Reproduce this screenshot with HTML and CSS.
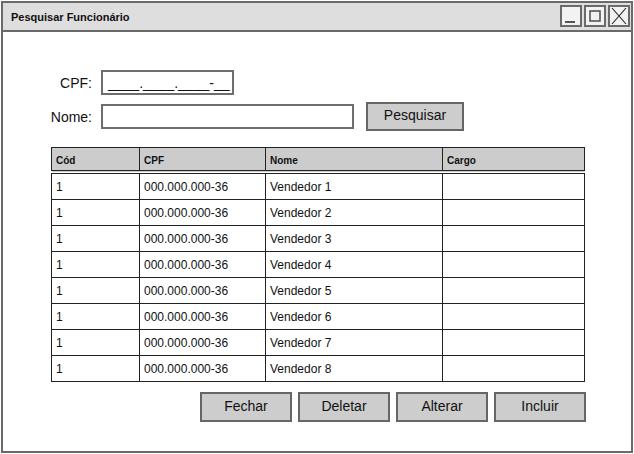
FILE: index.html
```html
<!DOCTYPE html>
<html lang="pt">
<head>
<meta charset="utf-8">
<title>Pesquisar Funcionário</title>
<link rel="stylesheet" href="styles.css">
</head>
<body>
<div class="window">
  <div class="titlebar">
    <span class="title">Pesquisar Funcionário</span>
    <div class="controls">
      <span class="ctl"><svg width="18" height="18" viewBox="0 0 18 18"><line x1="3" y1="15" x2="13" y2="15" stroke="#555" stroke-width="2"/></svg></span>
      <span class="ctl"><svg width="18" height="18" viewBox="0 0 18 18"><rect x="4" y="4" width="10" height="10" fill="none" stroke="#555" stroke-width="1.6"/></svg></span>
      <span class="ctl"><svg width="18" height="18" viewBox="0 0 18 18"><path d="M2 1 L16 17 M16 1 L2 17" stroke="#222" stroke-width="1.1" fill="none"/></svg></span>
    </div>
  </div>
  <div class="content">
    <div class="form">
      <div class="row">
        <label class="lbl">CPF:</label>
        <div class="input cpf">____.____.____-__</div>
      </div>
      <div class="row">
        <label class="lbl">Nome:</label>
        <div class="input nome"></div>
        <div class="btn search">Pesquisar</div>
      </div>
    </div>
    <table class="grid">
      <colgroup>
        <col class="c1"><col class="c2"><col class="c3"><col class="c4">
      </colgroup>
      <thead>
        <tr><th>Cód</th><th>CPF</th><th>Nome</th><th>Cargo</th></tr>
      </thead>
      <tbody>
        <tr><td>1</td><td>000.000.000-36</td><td>Vendedor 1</td><td></td></tr>
        <tr><td>1</td><td>000.000.000-36</td><td>Vendedor 2</td><td></td></tr>
        <tr><td>1</td><td>000.000.000-36</td><td>Vendedor 3</td><td></td></tr>
        <tr><td>1</td><td>000.000.000-36</td><td>Vendedor 4</td><td></td></tr>
        <tr><td>1</td><td>000.000.000-36</td><td>Vendedor 5</td><td></td></tr>
        <tr><td>1</td><td>000.000.000-36</td><td>Vendedor 6</td><td></td></tr>
        <tr><td>1</td><td>000.000.000-36</td><td>Vendedor 7</td><td></td></tr>
        <tr><td>1</td><td>000.000.000-36</td><td>Vendedor 8</td><td></td></tr>
      </tbody>
    </table>
    <div class="actions">
      <div class="btn">Fechar</div>
      <div class="btn">Deletar</div>
      <div class="btn">Alterar</div>
      <div class="btn">Incluir</div>
    </div>
  </div>
</div>
</body>
</html>
```
FILE: styles.css
```css
* { box-sizing: border-box; }
html, body { margin: 0; padding: 0; background: #fff; }
body {
  font-family: "Liberation Sans", Arial, sans-serif;
  color: #111;
}
.window {
  margin: 1px 0 0 1px;
  width: 632px;
  height: 452px;
  border: 2px solid #6a6a6a;
  background: #fff;
  display: flex;
  flex-direction: column;
}
.titlebar {
  height: 29px;
  background: #dedede;
  border-bottom: 2px solid #6a6a6a;
  display: flex;
  align-items: center;
  justify-content: space-between;
  padding: 0 1px 0 8px;
}
.title {
  font-size: 11px;
  font-weight: bold;
  color: #111;
}
.controls {
  display: flex;
  gap: 2px;
  margin-top: -1px;
}
.ctl {
  width: 22px;
  height: 22px;
  border: 2px solid #6a6a6a;
  background: #f2f2f2;
  display: flex;
  align-items: center;
  justify-content: center;
}
.ctl svg { display: block; }
.content {
  flex: 1;
  display: flex;
  flex-direction: column;
}
.form {
  padding-top: 38px;
  display: flex;
  flex-direction: column;
  gap: 7px;
}
.row {
  display: flex;
  align-items: center;
}
.lbl {
  width: 89px;
  text-align: right;
  font-size: 14px;
  color: #111;
  margin-right: 9px;
}
.input {
  height: 25px;
  border: 2px solid #6e6e6e;
  background: #fff;
  font-size: 14px;
}
.cpf {
  width: 133px;
  padding: 1px 0 0 5px;
  line-height: 20px;
}
.nome {
  width: 253px;
}
.btn {
  height: 30px;
  border: 2px solid #666;
  background: #cdcdcd;
  font-size: 14px;
  color: #111;
  display: flex;
  align-items: center;
  justify-content: center;
  padding-bottom: 3px;
}
.search {
  width: 98px;
  height: 29px;
  margin-left: 12px;
}
.grid {
  margin: 16px 0 0 48px;
  width: 533px;
  border-collapse: collapse;
  table-layout: fixed;
  font-size: 12px;
}
.c1 { width: 88px; }
.c2 { width: 126px; }
.c3 { width: 177px; }
.c4 { width: 142px; }
.grid th, .grid td {
  box-sizing: content-box;
  border: 1px solid #222;
  text-align: left;
  padding: 0 0 0 4px;
  white-space: nowrap;
}
.grid th {
  background: #cccccc;
  font-size: 10px;
  font-weight: bold;
  height: 19px;
  padding-top: 3px;
  border-bottom: 4px double #222;
}
.grid td {
  height: 25px;
  padding-top: 0;
}
.actions {
  display: flex;
  justify-content: flex-end;
  gap: 6px;
  margin-top: 10px;
  padding-right: 45px;
}
.actions .btn {
  width: 92px;
}
```
